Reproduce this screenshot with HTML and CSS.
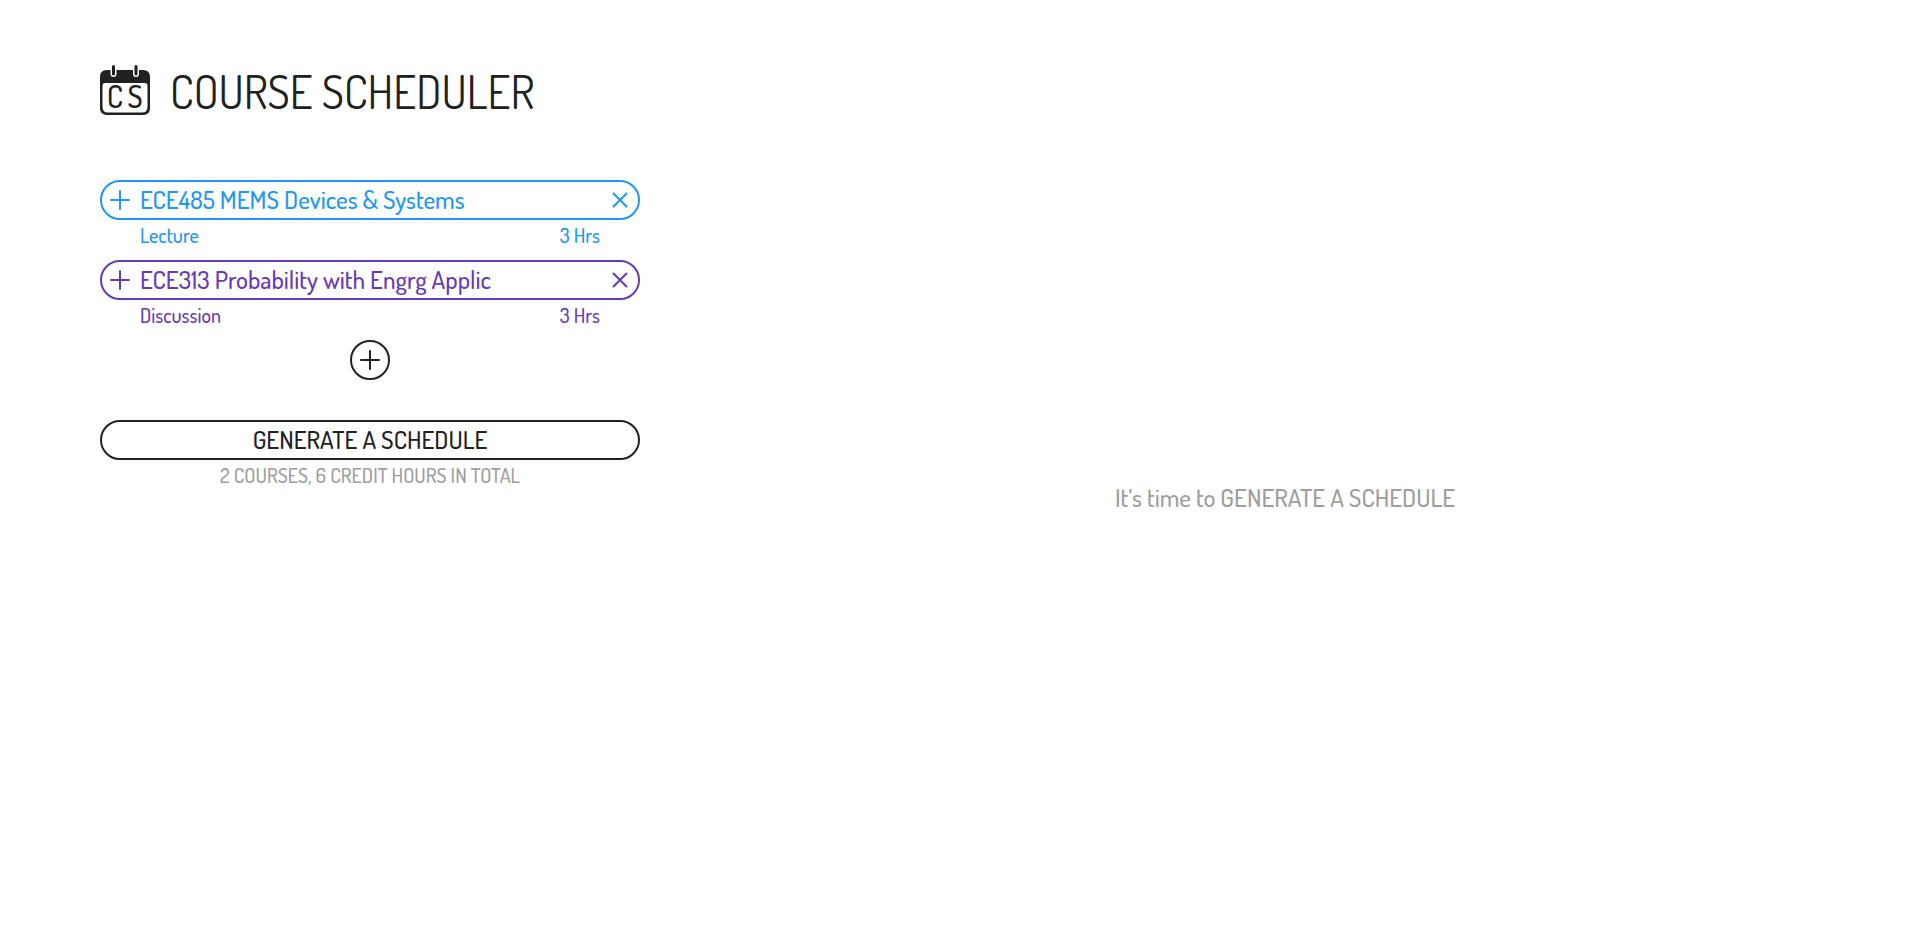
FILE: index.html
```
<!DOCTYPE html>
<html lang="en">
<head>
<meta charset="utf-8">
<meta name="viewport" content="width=device-width, initial-scale=1">
<title>Course Scheduler</title>
<link rel="stylesheet" href="styles.css">
</head>
<body>
<div class="app">
  <div class="sidebar">
    <header class="brand">
      <svg class="logo" viewBox="0 0 50 50" aria-hidden="true">
        <path fill="#212121" fill-rule="evenodd" d="M7 5H43Q50 5 50 12V43Q50 50 43 50H7Q0 50 0 43V12Q0 5 7 5ZM5 18Q2.500 18 2.500 21V42Q2.500 47.500 8 47.500H42Q47.500 47.500 47.500 42V21Q47.500 18 45 18Z"/>
        <g fill="none" stroke-linecap="round">
          <path stroke="#fff" stroke-width="6" d="M13.500 3V9M36 3V9"/>
          <path stroke="#212121" stroke-width="3" d="M13.500 1.500V9M36 1.500V9"/>
        </g>
        <g class="logo-text"><text x="15" y="43">C</text><text x="35" y="43">S</text></g>
      </svg>
      <h1 class="title">COURSE SCHEDULER</h1>
    </header>
    <main class="planner">
      <section class="course course-blue">
        <div class="bar">
          <button class="icon-button" type="button" aria-label="Show sections"><svg class="icon" viewBox="0 0 36 36"><path d="M9 18H27M18 9V27"/></svg></button>
          <h2 class="course-name">ECE485 MEMS Devices &amp; Systems</h2>
          <button class="icon-button" type="button" aria-label="Remove course"><svg class="icon" viewBox="0 0 36 36"><path d="M11.500 11.500L24.500 24.500M24.500 11.500L11.500 24.500"/></svg></button>
        </div>
        <div class="details"><span>Lecture</span><span>3 Hrs</span></div>
      </section>
      <section class="course course-purple">
        <div class="bar">
          <button class="icon-button" type="button" aria-label="Show sections"><svg class="icon" viewBox="0 0 36 36"><path d="M9 18H27M18 9V27"/></svg></button>
          <h2 class="course-name">ECE313 Probability with Engrg Applic</h2>
          <button class="icon-button" type="button" aria-label="Remove course"><svg class="icon" viewBox="0 0 36 36"><path d="M11.500 11.500L24.500 24.500M24.500 11.500L11.500 24.500"/></svg></button>
        </div>
        <div class="details"><span>Discussion</span><span>3 Hrs</span></div>
      </section>
      <button class="add-button" type="button" aria-label="Add a course"><svg class="icon" viewBox="0 0 36 36"><path d="M9 18H27M18 9V27"/></svg></button>
      <button class="generate-button" type="button">GENERATE A SCHEDULE</button>
      <p class="summary">2 COURSES, 6 CREDIT HOURS IN TOTAL</p>
    </main>
  </div>
  <section class="schedule">
    <p class="message">It’s time to GENERATE A SCHEDULE</p>
  </section>
</div>
</body>
</html>
```
FILE: styles.css
```
* { box-sizing: border-box; }
body {
  margin: 0;
  background: #fff;
  color: #212121;
  font-family: Dosis, "Liberation Sans Narrow", "Arial Narrow", Lato, sans-serif;
  font-weight: 500;
}
h1, h2, p { margin: 0; font-weight: 500; }
button { padding: 0; border: 0; background: none; color: inherit; font: inherit; cursor: pointer; }
.app { display: flex; min-height: 100vh; }
.sidebar { flex: none; width: 650px; padding: 60px 10px 40px 100px; }
.brand { display: flex; align-items: center; gap: 20px; height: 60px; }
.logo { flex: none; width: 50px; height: 50px; }
.logo-text { fill: #212121; font-size: 30px; font-weight: 500; text-anchor: middle; }
.title { padding-top: 4px; font-size: 45px; font-weight: 400; line-height: 60px; white-space: nowrap; }
.planner { display: flex; flex-direction: column; padding-top: 60px; }
.course-blue { color: #2196f3; }
.course-purple { color: #673ab7; }
.bar {
  display: flex;
  align-items: flex-start;
  height: 40px;
  border: 2px solid currentColor;
  border-radius: 20px;
}
.icon-button { flex: none; width: 36px; height: 36px; }
.icon {
  display: block;
  width: 36px;
  height: 36px;
  fill: none;
  stroke: currentColor;
  stroke-width: 2;
  stroke-linecap: round;
}
.course-name { flex: 1; padding-left: 2px; font-size: 25px; line-height: 34px; white-space: nowrap; }
.details { display: flex; justify-content: space-between; height: 40px; padding: 0 40px; font-size: 20px; line-height: 30px; }
.add-button { align-self: center; width: 40px; height: 40px; border: 2px solid currentColor; border-radius: 50%; }
.generate-button { height: 40px; margin-top: 40px; padding-bottom: 2px; border: 2px solid currentColor; border-radius: 20px; font-size: 25px; line-height: 34px; }
.summary { color: #9e9e9e; font-size: 20px; line-height: 30px; text-align: center; }
.schedule { flex: 1; display: flex; align-items: center; justify-content: center; padding-top: 44px; }
.message { color: #9e9e9e; font-size: 25px; line-height: 34px; }
```
